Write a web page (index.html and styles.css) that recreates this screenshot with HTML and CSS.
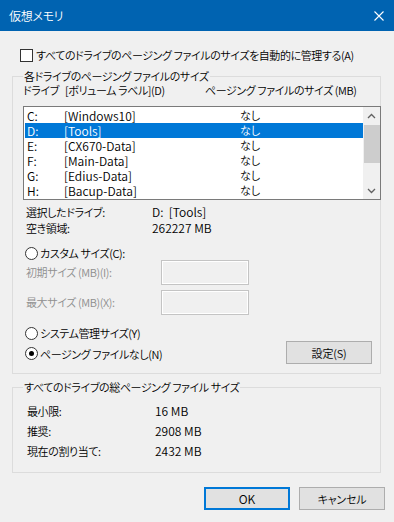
FILE: index.html
```html
<!DOCTYPE html>
<html lang="ja">
<head>
    <meta charset="UTF-8">
    <meta name="viewport" content="width=device-width, initial-scale=1.0">
    <title>仮想メモリ</title>
    <link rel="stylesheet" href="styles.css">
</head>
<body>
    <div class="titlebar">
        <span class="title">仮想メモリ</span>
        <svg class="close" width="10" height="10" viewBox="0 0 10 10">
            <path d="M0.5 0.5 L9.5 9.5 M9.5 0.5 L0.5 9.5" stroke="#fff" stroke-width="1.1" fill="none"/>
        </svg>
    </div>

    <div class="content">
        <label class="check-row"><span class="checkbox"></span>すべてのドライブのページング ファイルのサイズを自動的に管理する(A)</label>

        <fieldset class="group drives">
            <legend>各ドライブのページング ファイルのサイズ</legend>
            <div class="list-head">
                <span>ドライブ</span>
                <span>[ボリューム ラベル](D)</span>
                <span>ページング ファイルのサイズ (MB)</span>
            </div>
            <div class="listbox">
                <div class="rows">
                    <div class="row"><span>C:</span><span>[Windows10]</span><span class="jp">なし</span></div>
                    <div class="row selected"><span>D:</span><span>[Tools]</span><span class="jp">なし</span></div>
                    <div class="row"><span>E:</span><span>[CX670-Data]</span><span class="jp">なし</span></div>
                    <div class="row"><span>F:</span><span>[Main-Data]</span><span class="jp">なし</span></div>
                    <div class="row"><span>G:</span><span>[Edius-Data]</span><span class="jp">なし</span></div>
                    <div class="row"><span>H:</span><span>[Bacup-Data]</span><span class="jp">なし</span></div>
                </div>
                <div class="scrollbar">
                    <div class="arrow">
                        <svg width="9" height="6" viewBox="0 0 9 6"><path d="M1 5 L4.5 1.5 L8 5" stroke="#606060" stroke-width="1.3" fill="none"/></svg>
                    </div>
                    <div class="track"><div class="thumb"></div></div>
                    <div class="arrow">
                        <svg width="9" height="6" viewBox="0 0 9 6"><path d="M1 1 L4.5 4.5 L8 1" stroke="#606060" stroke-width="1.3" fill="none"/></svg>
                    </div>
                </div>
            </div>

            <div class="info first"><span class="info-label">選択したドライブ:</span><span class="num">D:&nbsp; [Tools]</span></div>
            <div class="info"><span class="info-label">空き領域:</span><span class="num">262227 MB</span></div>

            <label class="radio-row custom"><span class="radio"></span>カスタム サイズ(C):</label>
            <div class="field-row">
                <span class="field-label">初期サイズ (MB)(I):</span>
                <span class="textbox"></span>
            </div>
            <div class="field-row second">
                <span class="field-label">最大サイズ (MB)(X):</span>
                <span class="textbox"></span>
            </div>

            <label class="radio-row system"><span class="radio"></span>システム管理サイズ(Y)</label>
            <div class="last-row">
                <label class="radio-row"><span class="radio checked"></span>ページング ファイルなし(N)</label>
                <button class="btn set">設定(S)</button>
            </div>
        </fieldset>

        <fieldset class="group totals">
            <legend>すべてのドライブの総ページング ファイル サイズ</legend>
            <div class="total"><span class="total-label">最小限:</span><span class="num">16 MB</span></div>
            <div class="total"><span class="total-label">推奨:</span><span class="num">2908 MB</span></div>
            <div class="total"><span class="total-label">現在の割り当て:</span><span class="num">2432 MB</span></div>
        </fieldset>

        <div class="actions">
            <button class="btn default"><span class="num">OK</span></button>
            <button class="btn">キャンセル</button>
        </div>
    </div>
</body>
</html>
```

FILE: styles.css
```css
body {
    margin: 0;
    width: 394px;
    height: 522px;
    background-color: #f0f0f0;
    color: #000;
    font-family: "Noto Sans CJK JP", sans-serif;
    font-feature-settings: "palt";
    font-size: 11px;
    font-weight: 350;
    letter-spacing: -0.4px;
    line-height: 15px;
    overflow: hidden;
}
.num {
    font-size: 12px;
    letter-spacing: 0;
}
.titlebar {
    height: 31px;
    background-color: #0063b1;
    color: #fff;
    display: flex;
    align-items: center;
    justify-content: space-between;
    padding: 0 10px 0 9px;
}
.title {
    font-size: 12px;
    letter-spacing: -0.3px;
}
.content {
    padding: 17px 9px 0 12px;
}
.check-row {
    display: flex;
    align-items: center;
    white-space: nowrap;
}
.checkbox {
    width: 13px;
    height: 13px;
    box-sizing: border-box;
    border: 1px solid #333;
    background-color: #fff;
    margin: 0 3px 0 8px;
}
.group {
    margin: 7px 4px 0 0;
    padding: 0 0 9px 10px;
    border: 1px solid #dcdcdc;
    min-width: 0;
}
.group legend {
    padding: 0 1px;
    margin-left: 0;
    line-height: 13px;
}
.list-head {
    display: grid;
    grid-template-columns: 42px 140px 1fr;
    line-height: 14px;
    white-space: nowrap;
}
.listbox {
    display: flex;
    margin: 9px -1px 0 0;
    border: 1px solid #7a7a7a;
    background-color: #fff;
}
.rows {
    flex: 1;
    padding: 1px 0 1px 1px;
}
.row {
    display: grid;
    grid-template-columns: 37px 176px 1fr;
    height: 15px;
    line-height: 15px;
    padding-left: 2px;
    font-size: 12px;
    letter-spacing: 0;
}
.row .jp {
    font-size: 11px;
}
.row.selected {
    background-color: #0078d7;
    color: #fff;
}
.scrollbar {
    width: 17px;
    display: flex;
    flex-direction: column;
    background-color: #f0f0f0;
}
.arrow {
    height: 17px;
    display: flex;
    align-items: center;
    justify-content: center;
}
.track {
    flex: 1;
}
.thumb {
    margin: 1px 0 0 1px;
    height: 38px;
    background-color: #cdcdcd;
}
.info {
    display: flex;
    padding-left: 3px;
    line-height: 16px;
}
.info.first {
    margin-top: 4px;
}
.info-label {
    width: 126px;
}
.radio-row {
    display: flex;
    align-items: center;
    line-height: 16px;
}
.radio {
    width: 13px;
    height: 13px;
    box-sizing: border-box;
    border: 1px solid #333;
    border-radius: 50%;
    background-color: #fff;
    margin: 0 2px 0 2px;
    display: flex;
    align-items: center;
    justify-content: center;
}
.radio.checked::after {
    content: "";
    width: 5px;
    height: 5px;
    border-radius: 50%;
    background-color: #000;
}
.radio-row.custom {
    margin-top: 10px;
    line-height: 14px;
}
.radio-row.system {
    margin-top: 10px;
}
.field-row {
    display: flex;
    align-items: center;
    padding-left: 3px;
    color: #8e8e8e;
}
.field-row.second {
    margin-top: 5px;
}
.field-label {
    width: 135px;
}
.textbox {
    width: 88px;
    height: 25px;
    box-sizing: border-box;
    border: 1px solid #c4c4c4;
    box-shadow: inset 0 0 0 1px #fff;
}
.last-row {
    display: flex;
    align-items: center;
    justify-content: space-between;
}
.last-row .radio-row {
    padding-top: 2px;
}
.btn {
    width: 86px;
    height: 23px;
    box-sizing: border-box;
    border: 1px solid #adadad;
    background-color: #e1e1e1;
    font-family: inherit;
    font-feature-settings: "palt";
    font-size: 11px;
    font-weight: 350;
    letter-spacing: -0.2px;
    color: #000;
    padding: 0;
}
.btn.set {
    margin-right: 8px;
}
.btn.default {
    border: 2px solid #0078d7;
}
.totals {
    padding: 7px 0 11px 10px;
}
.total {
    display: flex;
    padding-left: 4px;
    line-height: 20px;
}
.total-label {
    width: 128px;
}
.actions {
    display: flex;
    justify-content: flex-end;
    gap: 9px;
    margin-top: 14px;
}
```
